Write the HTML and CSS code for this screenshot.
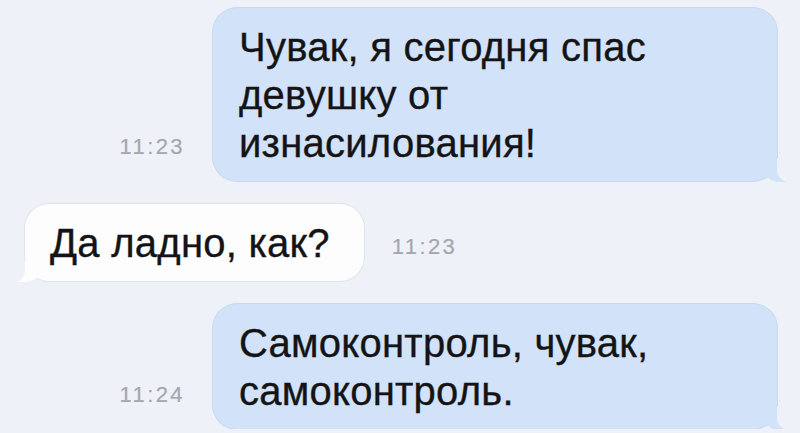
FILE: index.html
```html
<!DOCTYPE html>
<html lang="ru">
<head>
<meta charset="utf-8">
<title>Чат</title>
<link rel="stylesheet" href="styles.css">
</head>
<body>
<main class="chat">
  <div class="row row-out">
    <span class="time">11:23</span>
    <div class="bubble bubble-out">Чувак, я сегодня спас<br>девушку от<br>изнасилования!</div>
  </div>
  <div class="row row-in">
    <div class="bubble bubble-in">Да ладно, как?</div>
    <span class="time">11:23</span>
  </div>
  <div class="row row-out">
    <span class="time">11:24</span>
    <div class="bubble bubble-out">Самоконтроль, чувак,<br>самоконтроль.</div>
  </div>
</main>
</body>
</html>
```

FILE: styles.css
```css
html, body {
  margin: 0;
  padding: 0;
}

body {
  background: #eef2f8;
  font-family: "Liberation Sans", Arial, sans-serif;
  color: #141416;
  overflow: hidden;
}

.chat {
  display: flex;
  flex-direction: column;
  gap: 23px;
  padding: 8px 23px 0 25px;
}

.row {
  display: flex;
  align-items: last baseline;
  gap: 28px;
}

.row-out {
  justify-content: flex-end;
}

.row-in {
  justify-content: flex-start;
}

.time {
  font-size: 22px;
  letter-spacing: 2.4px;
  color: #a3a7ae;
  position: relative;
  top: -3px;
  -webkit-text-stroke: 0.2px #a3a7ae;
}

.bubble {
  position: relative;
  font-size: 40px;
  letter-spacing: 0.25px;
  line-height: 48px;
  padding: 15px 26px 14px 26px;
  border-radius: 24px;
  -webkit-text-stroke: 0.35px #141416;
}

.bubble-out {
  width: 512px;
  background: #d1e2f9;
  box-shadow: 0 0 0 1px #c9d9ef;
}

.bubble-out::before {
  content: "";
  position: absolute;
  right: -9px;
  bottom: -1px;
  width: 24px;
  height: 22px;
  background: #d1e2f9;
  border-bottom-left-radius: 18px 16px;
}

.bubble-out::after {
  content: "";
  position: absolute;
  right: -13px;
  bottom: -1px;
  width: 13px;
  height: 24px;
  background: #eef2f8;
  border-bottom-left-radius: 12px 12px;
}

.bubble-in {
  background: #fdfdfd;
  box-shadow: 0 0 0 1px #dfe3ea;
  padding-right: 34px;
  padding-left: 25px;
}

.bubble-in::before {
  content: "";
  position: absolute;
  left: -7px;
  bottom: -1px;
  width: 24px;
  height: 20px;
  background: #fdfdfd;
  border-bottom-right-radius: 18px 14px;
}

.bubble-in::after {
  content: "";
  position: absolute;
  left: -12px;
  bottom: -1px;
  width: 12px;
  height: 22px;
  background: #eef2f8;
  border-bottom-right-radius: 10px 12px;
}
```
